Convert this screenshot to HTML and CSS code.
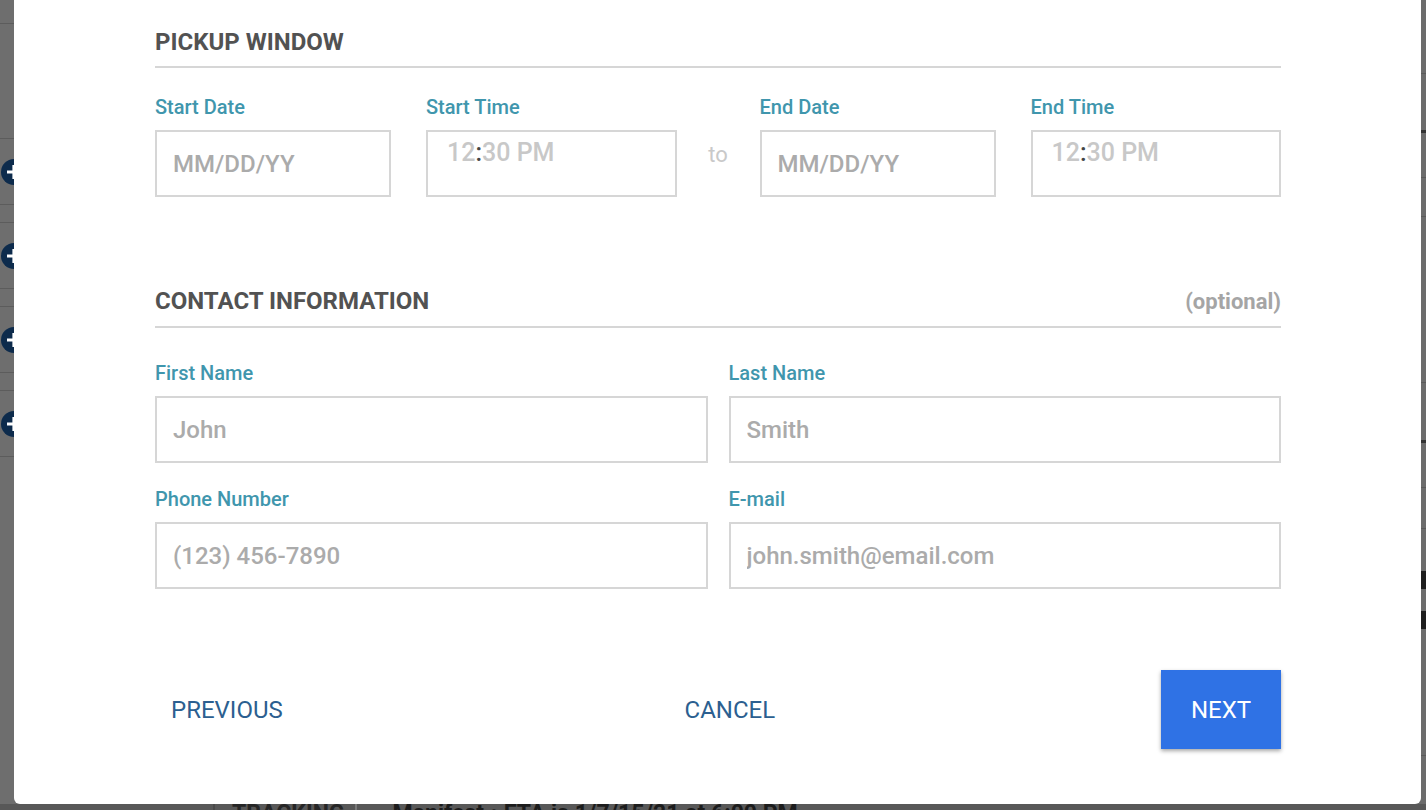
FILE: index.html
```html
<!DOCTYPE html>
<html lang="en">
<head>
  <meta charset="UTF-8" />
  <title>Schedule Pickup</title>
  <meta name="viewport" content="width=device-width, initial-scale=1.0" />
  <link rel="stylesheet" href="styles.css">
</head>
<body>

<div class="page">
  <!-- page behind the dialog -->
  <div class="side-left">
    <div class="lead"></div>
    <div class="card"><svg class="add" viewBox="0 0 26 26"><circle cx="13" cy="13" r="13" fill="#0d2b4c"/><path d="M6 13h14M13 6v14" stroke="#fff" stroke-width="3.2"/></svg></div>
    <div class="card"><svg class="add" viewBox="0 0 26 26"><circle cx="13" cy="13" r="13" fill="#0d2b4c"/><path d="M6 13h14M13 6v14" stroke="#fff" stroke-width="3.2"/></svg></div>
    <div class="card"><svg class="add" viewBox="0 0 26 26"><circle cx="13" cy="13" r="13" fill="#0d2b4c"/><path d="M6 13h14M13 6v14" stroke="#fff" stroke-width="3.2"/></svg></div>
    <div class="card"><svg class="add" viewBox="0 0 26 26"><circle cx="13" cy="13" r="13" fill="#0d2b4c"/><path d="M6 13h14M13 6v14" stroke="#fff" stroke-width="3.2"/></svg></div>
  </div>

  <div class="side-right">
    <div class="r r1"></div>
    <div class="r r2 dark"></div>
    <div class="r r3"></div>
    <div class="r r4"></div>
    <div class="r r5"></div>
    <div class="r r6 dark"></div>
    <div class="r r7"></div>
    <div class="r r8"></div>
    <div class="r r9 block"></div>
    <div class="r r10 block"></div>
    <div class="r r11"></div>
  </div>

  <div class="bottom">
    <div class="tracking">
      <span class="trk-label">TRACKING</span>
      <span class="trk-sep"></span>
      <span class="trk-text">Manifest &bull; ETA is 1/7/15/21 at 6:00 PM</span>
    </div>
  </div>

  <!-- dialog -->
  <div class="modal">
    <section class="section">
      <h2 class="section-title">PICKUP WINDOW</h2>

      <div class="window">
        <div class="pair">
          <div class="field">
            <label>Start Date</label>
            <input type="text" placeholder="MM/DD/YY">
          </div>
          <div class="field">
            <label>Start Time</label>
            <div class="time-box">12<span class="colon">:</span>30 PM</div>
          </div>
        </div>
        <div class="to">to</div>
        <div class="pair">
          <div class="field">
            <label>End Date</label>
            <input type="text" placeholder="MM/DD/YY">
          </div>
          <div class="field">
            <label>End Time</label>
            <div class="time-box">12<span class="colon">:</span>30 PM</div>
          </div>
        </div>
      </div>
    </section>

    <section class="section contact">
      <h2 class="section-title">CONTACT INFORMATION <span class="optional">(optional)</span></h2>

      <div class="contact-grid">
        <div class="field">
          <label>First Name</label>
          <input type="text" placeholder="John">
        </div>
        <div class="field">
          <label>Last Name</label>
          <input type="text" placeholder="Smith">
        </div>
        <div class="field">
          <label>Phone Number</label>
          <input type="text" placeholder="(123) 456-7890">
        </div>
        <div class="field">
          <label>E-mail</label>
          <input type="text" placeholder="john.smith@email.com">
        </div>
      </div>
    </section>

    <div class="actions">
      <button class="btn-link">PREVIOUS</button>
      <button class="btn-link">CANCEL</button>
      <button class="btn-primary">NEXT</button>
    </div>
  </div>
</div>

</body>
</html>
```

FILE: styles.css
```css
* { box-sizing: border-box; }

body {
  margin: 0;
  font-family: Roboto, 'Liberation Sans', sans-serif;
  background: #6c6c6c;
  overflow: hidden;
}

.page {
  position: relative;
  height: 810px;
  display: grid;
  grid-template-columns: 14px 1fr 5px;
  grid-template-rows: 804px 6px;
  overflow: hidden;
}

/* ---- background page ---- */
.side-left {
  grid-column: 1;
  grid-row: 1;
  background: #6e6e6e;
}

.lead {
  height: 24px;
  border-bottom: 1px solid #5c5c5c;
  margin-bottom: 114px;
}

.card {
  height: 67px;
  border-top: 1px solid #5c5c5c;
  border-bottom: 1px solid #5c5c5c;
  margin-bottom: 17px;
  display: flex;
  align-items: center;
  justify-content: flex-end;
}

.add {
  width: 26px;
  height: 26px;
  margin-right: -13px;
  flex-shrink: 0;
}

.side-right {
  grid-column: 3;
  grid-row: 1;
  background: #6c6c6c;
}

.r { border-bottom: 1px solid #5a5a5a; }
.r.dark { border-bottom: 3px solid #333; }
.r.block { border-bottom: 18px solid #1e1e1e; }
.r1 { height: 74px; }
.r2 { height: 59px; }
.r3 { height: 45px; }
.r4 { height: 39px; }
.r5 { height: 166px; }
.r6 { height: 60px; }
.r7 { height: 45px; }
.r8 { height: 41px; }
.r9 { height: 60px; }
.r10 { height: 40px; border-bottom-width: 21px; }
.r11 { height: 127px; }

.bottom {
  grid-column: 1 / -1;
  grid-row: 2;
  background: #585858;
  overflow: hidden;
}

.tracking {
  display: flex;
  align-items: flex-start;
  margin-top: -2px;
  margin-left: 213px;
  padding-left: 17px;
  border-left: 2px solid #4a4a4a;
  font-size: 23px;
  line-height: 23px;
  font-weight: 700;
  color: #1c1c1c;
}

.trk-label { color: #262626; }

.trk-sep {
  width: 2px;
  height: 23px;
  background: #7a7a7a;
  margin: 0 36px 0 10px;
}

/* ---- dialog ---- */
.modal {
  position: absolute;
  top: 0;
  left: 14px;
  right: 5px;
  background: #fff;
  border-radius: 0 0 6px 6px;
  padding: 28px 140px 55px 141px;
}

.section-title {
  margin: 0;
  display: flex;
  justify-content: space-between;
  align-items: baseline;
  font-size: 24px;
  line-height: 28px;
  font-weight: 700;
  color: #525252;
  padding-bottom: 10px;
  border-bottom: 2px solid #d6d6d6;
}

.optional {
  font-size: 22px;
  font-weight: 700;
  color: #a5a5a5;
}

.window {
  display: flex;
  margin-top: 27px;
}

.pair {
  flex: 1;
  display: grid;
  grid-template-columns: 236px 1fr;
  column-gap: 35px;
}

.to {
  width: 83px;
  align-self: flex-end;
  height: 67px;
  padding-top: 14px;
  text-align: center;
  font-size: 22px;
  line-height: 22px;
  color: #c9c9c9;
}

.field label {
  display: block;
  font-size: 20px;
  line-height: 24px;
  font-weight: 500;
  color: #4096ad;
  margin-bottom: 11px;
}

.field input {
  display: block;
  width: 100%;
  height: 67px;
  border: 2px solid #d6d6d6;
  border-radius: 0;
  padding: 0 16px;
  font-family: Roboto, 'Liberation Sans', sans-serif;
  font-size: 24px;
  font-weight: 500;
  color: #555;
  outline: none;
}

.field input::placeholder { color: #ababab; }

.time-box {
  height: 67px;
  border: 2px solid #d6d6d6;
  padding: 6px 19px 0;
  font-size: 25px;
  line-height: 30px;
  font-weight: 500;
  color: #c8c8c8;
}

.colon { color: #444; }

.contact { margin-top: 90px; }

.contact-grid {
  display: grid;
  grid-template-columns: 1fr 1fr;
  column-gap: 21px;
  row-gap: 24px;
  margin-top: 33px;
}

.actions {
  display: flex;
  justify-content: space-between;
  align-items: center;
  margin-top: 81px;
}

.actions button {
  height: 79px;
  border: none;
  font-family: Roboto, 'Liberation Sans', sans-serif;
  font-size: 24px;
  cursor: pointer;
}

.btn-link {
  background: none;
  color: #2c5f90;
  padding: 0 16px;
}

.btn-primary {
  width: 120px;
  background: #2f72e5;
  color: #fff;
  box-shadow: 0 2px 4px rgba(0, 0, 0, 0.35);
}
```
